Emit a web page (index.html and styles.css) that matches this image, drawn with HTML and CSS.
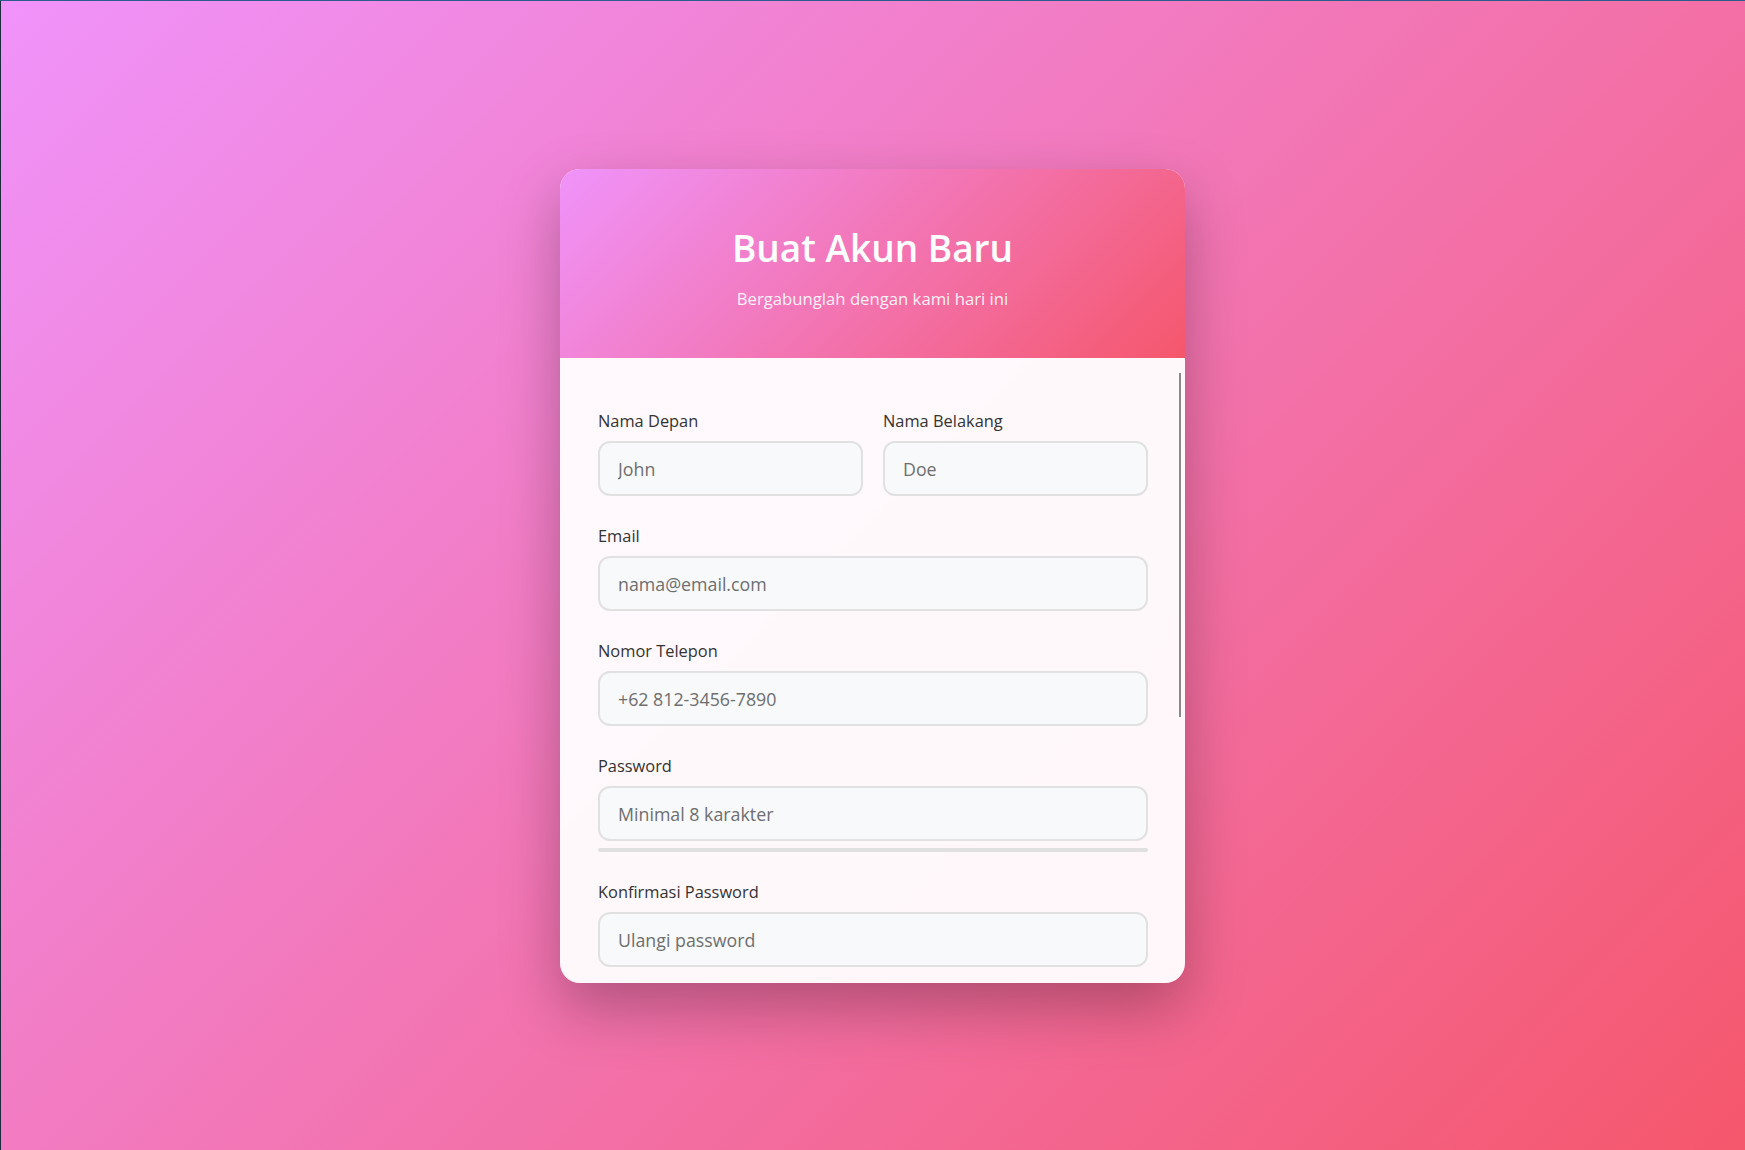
FILE: index.html
```html
<!DOCTYPE html>
<html lang="id">
<head>
<meta charset="utf-8">
<title>Buat Akun Baru</title>
<link rel="stylesheet" href="styles.css">
</head>
<body>
  <div class="card">
    <header class="card-header">
      <h1 class="title">Buat Akun Baru</h1>
      <p class="subtitle">Bergabunglah dengan kami hari ini</p>
    </header>
    <div class="card-body">
      <form class="form">
        <div class="row">
          <div class="field">
            <label class="label" for="first">Nama Depan</label>
            <input class="input" id="first" type="text" placeholder="John">
          </div>
          <div class="field">
            <label class="label" for="last">Nama Belakang</label>
            <input class="input" id="last" type="text" placeholder="Doe">
          </div>
        </div>
        <div class="field">
          <label class="label" for="email">Email</label>
          <input class="input" id="email" type="email" placeholder="nama@email.com">
        </div>
        <div class="field">
          <label class="label" for="phone">Nomor Telepon</label>
          <input class="input" id="phone" type="tel" placeholder="+62 812-3456-7890">
        </div>
        <div class="field">
          <label class="label" for="password">Password</label>
          <input class="input" id="password" type="password" placeholder="Minimal 8 karakter">
          <div class="strength"><div class="strength-fill"></div></div>
        </div>
        <div class="field field-last">
          <label class="label" for="confirm">Konfirmasi Password</label>
          <input class="input" id="confirm" type="password" placeholder="Ulangi password">
        </div>
      </form>
    </div>
    <div class="scroll-thumb" aria-hidden="true"></div>
  </div>
</body>
</html>
```

FILE: styles.css
```css
* {
  box-sizing: border-box;
}

html, body {
  margin: 0;
  padding: 0;
}

body {
  min-height: 100vh;
  display: flex;
  align-items: center;
  justify-content: center;
  font-family: "Open Sans", "Noto Sans", sans-serif;
  background: linear-gradient(135deg, #f093fb 0%, #f5576c 100%);
  box-shadow: inset 0 1px 0 #2a5d8e, inset 1px 0 0 #1d2c3d;
}

.card {
  position: relative;
  width: 625px;
  height: 814px;
  margin-top: 2px;
  border-radius: 20px;
  overflow: hidden;
  display: flex;
  flex-direction: column;
  background: rgba(255, 255, 255, 0.95);
  box-shadow: 0 25px 60px rgba(0, 0, 0, 0.28);
}

.card-header {
  flex: 0 0 189px;
  padding: 57px 40px 0;
  text-align: center;
  color: #fff;
  background: linear-gradient(135deg, #f093fb 0%, #f5576c 100%);
}

.title {
  margin: 0 0 17px;
  font-size: 37px;
  line-height: 44px;
  font-weight: 600;
}

.subtitle {
  margin: 0;
  font-size: 16.7px;
  line-height: 24px;
  color: rgba(255, 255, 255, 0.92);
}

.card-body {
  flex: 1 1 auto;
  overflow: hidden;
}

.form {
  padding: 51px 37px 0 38px;
}

.row {
  display: grid;
  grid-template-columns: 1fr 1fr;
  gap: 20px;
}

.field {
  margin-bottom: 28px;
}

.field-last {
  margin-bottom: 0;
}

.label {
  display: block;
  margin-bottom: 9px;
  font-size: 16.4px;
  line-height: 23px;
  color: #333;
}

.input {
  display: block;
  width: 100%;
  height: 55px;
  padding: 0 18px;
  border: 2px solid #e1e1e1;
  border-radius: 12px;
  background: #f8f9fa;
  font-family: inherit;
  font-size: 17.8px;
  color: #333;
  outline: none;
}

.input::placeholder {
  color: #6e6e6e;
}

.strength {
  margin-top: 7px;
  height: 4px;
  border-radius: 2px;
  background: #e0e0e0;
  overflow: hidden;
}

.strength-fill {
  width: 0;
  height: 100%;
}

.scroll-thumb {
  position: absolute;
  top: 204px;
  right: 4px;
  width: 2px;
  height: 344px;
  background: #8a8a8a;
}
```
